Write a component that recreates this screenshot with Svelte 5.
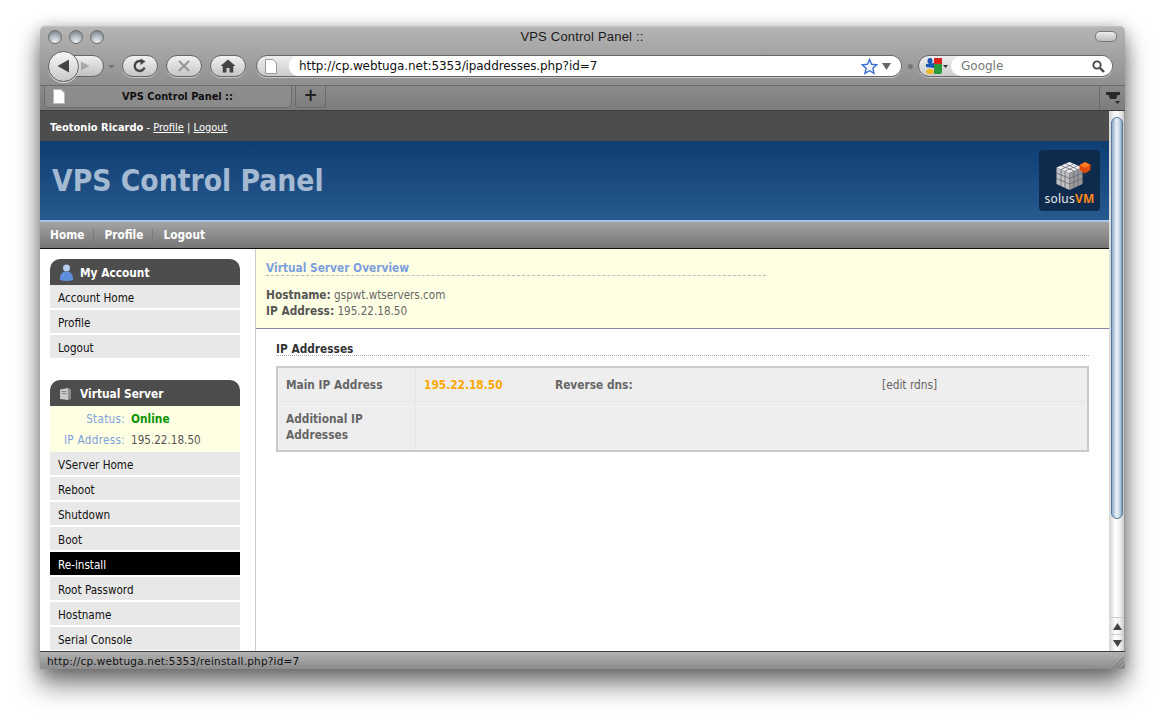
<script>
  const account = ['Account Home', 'Profile', 'Logout'];
  const server = ['VServer Home', 'Reboot', 'Shutdown', 'Boot', 'Re-install', 'Root Password', 'Hostname', 'Serial Console'];
</script>

<div class="desktop">
<div class="window">
  <div class="chrome">
    <div class="titlebar">
      <div class="lights"><i></i><i></i><i></i></div>
      <div class="title">VPS Control Panel ::</div>
      <div class="pill"></div>
    </div>
    <div class="toolbar">
      <div class="backfwd">
        <div class="back"><svg width="18" height="18" viewBox="0 0 18 18"><path d="M14 2.500V15.500L2.500 9Z" fill="#444"/></svg></div>
        <div class="fwd"><svg width="12" height="12" viewBox="0 0 12 12"><path d="M2 1.500V10.500L10.500 6Z" fill="#a8a8a8"/></svg></div>
      </div>
      <svg class="drop" width="7" height="4" viewBox="0 0 7 4"><path d="M0 0H7L3.500 4Z" fill="#777"/></svg>
      <div class="tbtn"><svg width="16" height="16" viewBox="0 0 16 16"><path d="M12.500 9.500A5 5 0 1 1 9.500 3.300" fill="none" stroke="#444" stroke-width="2.400"/><path d="M8.500 0.500L13.500 3.500L8.500 7Z" fill="#444"/></svg></div>
      <div class="tbtn"><svg width="14" height="14" viewBox="0 0 14 14"><path d="M2 2L12 12M12 2L2 12" stroke="#999" stroke-width="2.200"/></svg></div>
      <div class="tbtn"><svg width="16" height="14" viewBox="0 0 16 14"><path d="M8 0.500L15.500 7H13.300V13.500H9.500V9H6.500V13.500H2.700V7H0.500Z" fill="#444"/></svg></div>
      <div class="urlbar">
        <div class="urlicon"><svg width="12" height="15" viewBox="0 0 12 15"><path d="M0.500 0.500H8L11.500 4V14.500H0.500Z" fill="#fff" stroke="#999"/></svg></div>
        <div class="urlfield">
          <span class="url">http://cp.webtuga.net:5353/ipaddresses.php?id=7</span>
          <svg width="17" height="17" viewBox="0 0 17 17"><path d="M8.500 1.500L10.600 6.300L15.800 6.800L11.900 10.200L13 15.300L8.500 12.700L4 15.300L5.100 10.200L1.200 6.800L6.400 6.300Z" fill="#f4f8ff" stroke="#3d6fd1" stroke-width="1.400"/></svg>
          <svg class="urldrop" width="9" height="7" viewBox="0 0 9 7"><path d="M0 0H9L4.500 7Z" fill="#666"/></svg>
        </div>
      </div>
      <i class="dot"></i>
      <div class="search">
        <div class="engine">
          <svg width="16" height="16" viewBox="0 0 16 16"><rect x="8" y="0" width="8" height="6" fill="#d8261c"/><path d="M8 6H16V14Q16 16 14 16H8Z" fill="#2c9a3a"/><ellipse cx="4" cy="3" rx="2.500" ry="3" fill="#1c57b8"/><path d="M0 6L8 5V10L0 9Z" fill="#1c57b8"/><ellipse cx="4" cy="13.500" rx="3.800" ry="2.500" fill="#f1b51e"/></svg>
          <svg width="5" height="3" viewBox="0 0 5 3"><path d="M0 0H5L2.500 3Z" fill="#333"/></svg>
        </div>
        <div class="searchfield">
          <span>Google</span>
          <svg width="13" height="13" viewBox="0 0 13 13"><circle cx="5" cy="5" r="3.700" fill="none" stroke="#444" stroke-width="1.800"/><path d="M8 8L12 12" stroke="#444" stroke-width="2.400"/></svg>
        </div>
      </div>
    </div>
    <div class="tabbar">
      <div class="tab">
        <svg width="12" height="15" viewBox="0 0 12 15"><path d="M0.500 0.500H8L11.500 4V14.500H0.500Z" fill="#fff" stroke="#bbb"/></svg>
        <span>VPS Control Panel ::</span>
      </div>
      <div class="newtab">+</div>
      <div class="tabend"><svg width="16" height="14" viewBox="0 0 16 14"><path d="M1 1H15V4H12.500L11 8H5L3.500 4H1Z" fill="#2a2a2a"/><path d="M10 10H15L12.500 13Z" fill="#2a2a2a"/></svg></div>
    </div>
  </div>

  <div class="body">
    <div class="page">
      <div class="userbar"><b>Teotonio Ricardo</b> - <a href="#p">Profile</a> | <a href="#l">Logout</a></div>
      <div class="banner">
        <h1>VPS Control Panel</h1>
        <div class="logo">
          <svg width="46" height="30" viewBox="0 0 46 30">
            <path d="M22.500 1L35.500 6.500L22.500 12L9.500 6.500Z" fill="#f2f2f2"/>
            <path d="M9.500 6.500L22.500 12V29L9.500 23Z" fill="#c2c2c2"/>
            <path d="M35.500 6.500L22.500 12V29L35.500 23Z" fill="#9a9a9a"/>
            <path d="M9.500 12L22.500 17.500L35.500 12M9.500 17.500L22.500 23L35.500 17.500M14 8.500V25M18 10.500V27M27 10.500V27M31 8.500V25M14 4.500L27 10M18.500 2.800L31 8.500M31 4.500L18 10M27 2.800L14 8.500" fill="none" stroke="#667" stroke-width="0.800"/>
            <path d="M38 1L43.500 4V9L38 12.500L32.500 9V4Z" fill="#e04a0c"/>
            <path d="M38 1L43.500 4L38 7L32.500 4Z" fill="#ff7a22"/>
          </svg>
          <div class="logotext">solus<b>VM</b></div>
        </div>
      </div>
      <nav class="mainnav"><a href="#h">Home</a><a href="#p">Profile</a><a href="#l">Logout</a></nav>
      <div class="columns">
        <aside>
          <div class="sidehead">
            <svg width="15" height="17" viewBox="0 0 15 17"><circle cx="7.500" cy="4" r="3.500" fill="#b6cff2"/><path d="M1 16C0.500 9.500 4 7.500 7.500 7.500S14.500 9.500 14 16Q7.500 18 1 16Z" fill="#5f8fdc"/></svg>
            My Account
          </div>
          <ul>
            {#each account as item}
              <li>{item}</li>
            {/each}
          </ul>
          <div class="sidehead second">
            <svg width="15" height="14" viewBox="0 0 15 14"><path d="M1 2.500L9 1V13L1 12Z" fill="#c9c9c9"/><path d="M9 1L12 2.500V12L9 13Z" fill="#8d8d8d"/><path d="M2.500 4.500H7.500M2.500 6.500H7.500" stroke="#888"/></svg>
            Virtual Server
          </div>
          <div class="status">
            <div class="statrow"><span class="k">Status:</span><b>Online</b></div>
            <div class="statrow"><span class="k">IP Address:</span><span>195.22.18.50</span></div>
          </div>
          <ul>
            {#each server as item}
              <li class:active={item === 'Re-install'}>{item}</li>
            {/each}
          </ul>
        </aside>
        <main>
          <section class="overview">
            <h2>Virtual Server Overview</h2>
            <p><b>Hostname:</b> gspwt.wtservers.com<br /><b>IP Address:</b> 195.22.18.50</p>
          </section>
          <section class="content">
            <h3>IP Addresses</h3>
            <table>
              <tbody>
                <tr>
                  <th>Main IP Address</th>
                  <td class="ip">195.22.18.50</td>
                  <td class="lbl">Reverse dns:</td>
                  <td class="edit">[edit rdns]</td>
                </tr>
                <tr>
                  <th>Additional IP<br />Addresses</th>
                  <td colspan="3"></td>
                </tr>
              </tbody>
            </table>
          </section>
        </main>
      </div>
    </div>
    <div class="scrollbar">
      <div class="track"><div class="thumb"></div></div>
      <div class="arrow"><svg width="9" height="7" viewBox="0 0 9 7"><path d="M0 7H9L4.500 0Z" fill="#444"/></svg></div>
      <div class="arrow"><svg width="9" height="7" viewBox="0 0 9 7"><path d="M0 0H9L4.500 7Z" fill="#444"/></svg></div>
    </div>
  </div>

  <div class="statusbar">
    <span>http://cp.webtuga.net:5353/reinstall.php?id=7</span>
    <svg class="grip" width="11" height="11" viewBox="0 0 11 11"><path d="M0 11L11 0M4 11L11 4M8 11L11 8" stroke="#777"/></svg>
  </div>
</div>
</div>

<style>
  :global(body) { margin: 0; background: #fff; }
  .desktop { height: 723px; width: 1164px; overflow: hidden; box-sizing: border-box; padding: 26px 0 0 40px; }
  .window {
    box-sizing: border-box;
    width: 1085px;
    height: 643px;
    display: flex;
    flex-direction: column;
    border-radius: 5px 5px 0 0;
    font-family: "DejaVu Sans", sans-serif;
    box-shadow: 0 16px 26px rgba(0, 0, 0, 0.5), 0 2px 16px rgba(0, 0, 0, 0.28);
  }
  .chrome {
    height: 85px;
    flex: none;
    display: flex;
    flex-direction: column;
    border-radius: 5px 5px 0 0;
    background: linear-gradient(#c4c4c4 0, #b4b4b4 2px, #8f8f8f 59px);
    border-bottom: 1px solid #3c3c3c;
    box-sizing: border-box;
  }
  .titlebar { height: 21px; display: flex; align-items: center; position: relative; flex: none; padding: 0 8px; }
  .lights { display: flex; gap: 7px; }
  .lights i {
    width: 14px; height: 14px; border-radius: 50%; box-sizing: border-box;
    border: 1px solid #6e6e6e;
    background: radial-gradient(circle at 50% 90%, #eef2f5 0, #b7bfc5 45%, #6f767c 100%);
  }
  .title { position: absolute; left: 0; right: 0; text-align: center; font: 13px "Liberation Sans", sans-serif; color: #1b1b1b; top: 3px; letter-spacing: 0.2px; padding-right: 1px; }
  .pill { margin-left: auto; width: 20px; height: 9px; border: 1px solid #777; border-radius: 5px; background: linear-gradient(#eee, #bbb); }
  .toolbar { height: 38px; flex: none; display: flex; align-items: center; padding: 0 0 0 7px; }
  .backfwd { position: relative; width: 57px; height: 24px; margin-top: 1px; }
  .back {
    position: absolute; left: 1px; top: -4px; width: 31px; height: 31px; box-sizing: border-box; z-index: 1;
    border: 1px solid #666; border-radius: 50%; background: linear-gradient(#f7f7f7, #c9c9c9);
    display: flex; align-items: center; justify-content: center; box-shadow: 0 1px 0 #ddd;
  }
  .fwd {
    position: absolute; left: 18px; top: 0; width: 39px; height: 22px; box-sizing: border-box;
    border: 1px solid #666; border-radius: 0 12px 12px 0; background: linear-gradient(#f0f0f0, #c0c0c0);
    display: flex; align-items: center; justify-content: flex-end; padding-right: 12px;
  }
  .drop { margin: 1px 7px 0 4px; }
  .tbtn {
    width: 36px; height: 22px; box-sizing: border-box; margin-right: 8px; flex: none;
    border: 1px solid #666; border-radius: 11px; background: linear-gradient(#f2f2f2, #c5c5c5);
    display: flex; align-items: center; justify-content: center; box-shadow: 0 1px 0 #c8c8c8;
  }
  .urlbar {
    margin-left: 2px; width: 646px; height: 22px; box-sizing: border-box; display: flex; flex: none;
    border: 1px solid #666; border-radius: 11px; background: linear-gradient(#eee, #ccc); box-shadow: 0 1px 0 #c8c8c8;
  }
  .urlicon { width: 32px; flex: none; display: flex; align-items: center; justify-content: center; padding-right: 4px; box-sizing: border-box; }
  .urlfield { flex: 1; background: #fff; border-radius: 10px 11px 11px 10px; display: flex; align-items: center; padding-left: 10px; padding-right: 10px; }
  .url { flex: 1; font: 12px "DejaVu Sans", sans-serif; color: #111; letter-spacing: -0.09px; }
  .urldrop { margin-left: 4px; }
  .dot { width: 5px; height: 5px; border-radius: 50%; background: #777; margin: 0 6px 0 6px; flex: none; }
  .search {
    width: 195px; height: 22px; box-sizing: border-box; display: flex; flex: none; margin-left: -1px;
    border: 1px solid #666; border-radius: 11px; background: linear-gradient(#eee, #ccc); box-shadow: 0 1px 0 #c8c8c8;
  }
  .engine { width: 32px; flex: none; display: flex; align-items: center; padding-left: 7px; gap: 1px; box-sizing: border-box; }
  .searchfield { flex: 1; background: #fff; border-radius: 11px; display: flex; align-items: center; padding: 0 7px 0 10px; justify-content: space-between; font: 12px "DejaVu Sans", sans-serif; color: #777; }
  .tabbar {
    flex: 1; display: flex; background: linear-gradient(#8b8b8b, #7c7c7c);
    border-top: 1px solid #6c6c6c; padding-left: 4px;
  }
  .tab {
    width: 248px; height: 22px; box-sizing: border-box; display: flex; align-items: center; padding-left: 8px;
    background: linear-gradient(#8e8e8e, #8a8a8a); border: 1px solid #6b6b6b; border-top: 0; border-radius: 0 0 5px 5px;
    font: bold 9.800px "DejaVu Sans", sans-serif; color: #111;
  }
  .tab span { margin-left: 57px; }
  .newtab {
    width: 31px; height: 22px; box-sizing: border-box; margin-left: 3px; text-align: center;
    border: 1px solid #6b6b6b; border-top: 0; border-radius: 0 0 4px 4px;
    font: bold 17px/19px "DejaVu Sans", sans-serif; color: #222;
  }
  .tabend { margin-left: auto; width: 25px; border-left: 1px solid #6b6b6b; display: flex; align-items: center; justify-content: center; }

  .body { flex: 1; min-height: 0; display: flex; background: #fff; box-sizing: border-box; }
  .page { flex: 1; min-width: 0; display: flex; flex-direction: column; font-family: "DejaVu Sans Condensed", "DejaVu Sans", sans-serif; font-size: 11.600px; overflow: hidden; }
  .page b, .page th, .page td, .page h2, .page h3, .sidehead, .mainnav a { font-size: 11.800px; }
  .userbar { height: 30px; flex: none; background: #4d4d4d; color: #fff; line-height: 33px; padding-left: 10px; font-size: 11px; box-sizing: border-box; }
  .userbar b { font-size: 11px; }
  .userbar a { color: #fff; }
  .banner { height: 79px; flex: none; background: linear-gradient(#0e3e72, #28598f); display: flex; align-items: center; justify-content: space-between; padding: 0 9px 0 12px; box-sizing: border-box; }
  h1 { margin: 0; color: #a4bad2; font-size: 29.700px; font-weight: bold; font-family: "DejaVu Sans Condensed", "DejaVu Sans", sans-serif; }
  .logo { width: 61px; height: 61px; background: #0e2b4d; border-radius: 4px; display: flex; flex-direction: column; align-items: center; padding-top: 11px; box-sizing: border-box; }
  .logotext { font: 12px/14px "Noto Sans", sans-serif; color: #e8e8e8; letter-spacing: 0.2px; margin-top: 1px; }
  .logotext b { color: #f7871e; font-size: 12px; }
  .mainnav { height: 29px; flex: none; box-sizing: border-box; border-top: 2px solid #a9c4e8; border-bottom: 1px solid #111; background: linear-gradient(#a3a3a3, #767676); display: flex; align-items: center; padding-left: 10px; }
  .mainnav a { color: #fff; font-weight: bold; text-decoration: none; padding-right: 9px; margin-right: 10px; border-right: 1px solid #7a7a7a; line-height: 13px; }
  .mainnav a:last-child { border: 0; }
  .columns { flex: 1; min-height: 0; display: flex; }
  aside { width: 216px; flex: none; box-sizing: border-box; border-right: 1px solid #ccc; padding: 10px 15px 0 10px; }
  .sidehead { height: 26px; box-sizing: border-box; padding: 1px 0 0 9px; background: #4d4d4d; color: #fff; font-weight: bold; border-radius: 10px 10px 0 0; display: flex; align-items: center; gap: 6px; }
  .sidehead svg { flex: none; }
  .sidehead.second { margin-top: 22px; }
  ul { list-style: none; margin: 0; padding: 0; display: flex; flex-direction: column; gap: 2px; }
  li { height: 23px; box-sizing: border-box; padding: 2px 0 0 8px; line-height: 23px; background: #e8e8e8; color: #111; flex: none; }
  li.active { background: #000; color: #fff; }
  .status { height: 46px; background: #ffffe3; box-sizing: border-box; padding-top: 3px; }
  .statrow { height: 21px; line-height: 21px; display: flex; gap: 6px; color: #555; }
  .statrow .k { width: 75px; text-align: right; color: #7d9fdc; letter-spacing: 0.3px; }
  .statrow b { color: #0a9400; }
  main { flex: 1; min-width: 0; }
  .overview { height: 80px; box-sizing: border-box; background: #ffffe3; border-bottom: 1px solid #8a84a8; padding: 12px 10px 0; }
  h2 { margin: 0; width: 500px; font-weight: bold; color: #7d9fdc; border-bottom: 1px dashed #bbb; line-height: 14px; height: 14px; }
  .overview p { margin: 11px 0 0; color: #666; line-height: 16px; }
  .overview p b { color: #555; }
  .content { padding: 12px 20px 0; }
  h3 { margin: 0 0 10px; color: #333; border-bottom: 1px dotted #aaa; line-height: 16px; height: 14px; }
  table { width: 100%; border-collapse: collapse; border: 2px solid #cacaca; background: #eee; table-layout: fixed; }
  tr + tr { border-top: 1px solid #e6e6e6; }
  th, td { padding: 1px 8px 0; height: 32px; text-align: left; font-weight: bold; color: #666; line-height: 16px; }
  th { width: 121px; border-right: 1px solid #e6e6e6; }
  tr + tr th { height: 47px; }
  .ip { color: #fba800; width: 115px; }
  .lbl { width: 311px; }
  .edit { font-weight: normal; }
  .scrollbar { width: 16px; flex: none; display: flex; flex-direction: column; background: linear-gradient(90deg, #d8d8d8, #fff 40%, #f0f0f0 70%, #ccc); border-left: 1px solid #ddd; border-right: 1px solid #999; box-sizing: border-box; }
  .track { flex: 1; min-height: 0; padding: 6px 1px 0; }
  .thumb { height: 402px; border: 1px solid #55789c; border-radius: 7px; background: linear-gradient(90deg, #8fa9c6, #eaf1f8 45%, #c7d5e4 75%, #7f9cbc); box-sizing: border-box; }
  .arrow { height: 16px; flex: none; display: flex; align-items: center; justify-content: center; border-top: 1px solid #ccc; }
  .statusbar { height: 18px; flex: none; box-sizing: border-box; border-top: 1px solid #3c3c3c; background: linear-gradient(#b2b2b2, #8c8c8c); display: flex; align-items: center; padding-left: 7px; font: 10.500px "DejaVu Sans", sans-serif; color: #111; position: relative; letter-spacing: 0.19px; }
  .grip { position: absolute; right: 1px; bottom: 1px; }
</style>
